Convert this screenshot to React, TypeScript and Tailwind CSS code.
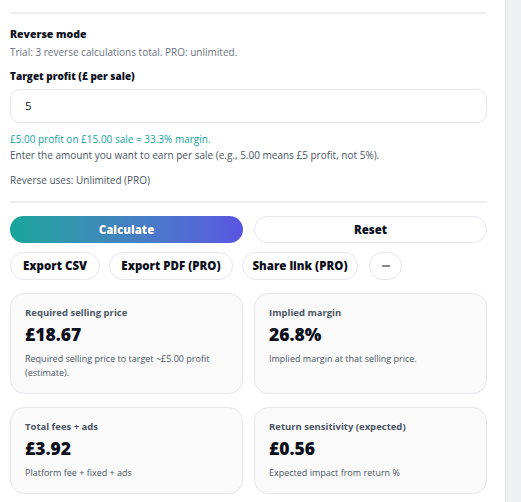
import { Minus } from "lucide-react";

function Card({ title, value, desc }: { title: string; value: string; desc: string }) {
  return (
    <div className="rounded-[14px] border border-[#e5e7eb] bg-[#fafafb] px-[14px] pt-[12px] pb-[13px]">
      <div className="text-[9.5px] font-bold text-[#4b5563] leading-[14px]">{title}</div>
      <div className="mt-[2px] text-[17.5px] font-extrabold text-[#0b0f1a] leading-[24px]">{value}</div>
      <div className="mt-[6px] text-[9px] text-[#4b5563] leading-[14px]">{desc}</div>
    </div>
  );
}

const pill = "h-[28px] rounded-full border border-[#e5e7eb] bg-white text-[11.5px] font-extrabold text-[#0b0f1a] whitespace-nowrap";

export default function App() {
  return (
    <div className="flex h-[502px] w-[521px] overflow-hidden bg-white" style={{ fontFamily: '"Open Sans", "Noto Sans", sans-serif' }}>
      <div className="w-[505px] px-[10px] pr-[18px]">
        <div className="mt-[12px] border-t-2 border-[#eeeff1]" />
        <div className="mt-[12px] text-[10.5px] font-extrabold text-[#0b0f1a] leading-[16px]">Reverse mode</div>
        <div className="mt-[3px] text-[10px] text-[#6b7280] leading-[14px]">Trial: 3 reverse calculations total. PRO: unlimited.</div>
        <div className="mt-[10px] text-[10px] font-extrabold text-[#0b0f1a] leading-[14px]">Target profit (£ per sale)</div>
        <div className="mt-[6px] flex h-[34px] items-center rounded-[10px] border border-[#e5e7eb] px-[14px] text-[11.5px] text-[#111827]">5</div>
        <div className="mt-[9px] text-[10px] text-[#14a39b] leading-[14px]">£5.00 profit on £15.00 sale ≈ 33.3% margin.</div>
        <div className="mt-[2px] text-[10px] text-[#4b5563] leading-[14px]">Enter the amount you want to earn per sale (e.g., 5.00 means £5 profit, not 5%).</div>
        <div className="mt-[11px] text-[10px] text-[#4b5563] leading-[14px]">Reverse uses: Unlimited (PRO)</div>
        <div className="mt-[14px] border-t-2 border-[#eeeff1]" />
        <div className="mt-[13px] grid grid-cols-2 gap-[11px]">
          <button className="h-[27px] rounded-full bg-gradient-to-r from-[#14a59a] to-[#5a55e2] text-[11.5px] font-extrabold text-white [text-shadow:0_0_1px_rgba(0,0,0,0.3)]">Calculate</button>
          <button className="h-[27px] rounded-full border border-[#e5e7eb] bg-white text-[11.5px] font-extrabold text-[#0b0f1a]">Reset</button>
        </div>
        <div className="mt-[9px] flex gap-[9px]">
          <button className={`${pill} w-[90px]`}>Export CSV</button>
          <button className={`${pill} w-[124px]`}>Export PDF (PRO)</button>
          <button className={`${pill} w-[116px]`}>Share link (PRO)</button>
          <button className="ml-[2px] flex h-[28px] w-[33px] items-center justify-center rounded-full border border-[#e5e7eb] bg-white text-[#0b0f1a]"><Minus size={12} strokeWidth={2} /></button>
        </div>
        <div className="mt-[13px] grid grid-cols-2 gap-x-[11px] gap-y-[13px]">
          <Card title="Required selling price" value="£18.67" desc="Required selling price to target ~£5.00 profit (estimate)." />
          <Card title="Implied margin" value="26.8%" desc="Implied margin at that selling price." />
          <Card title="Total fees + ads" value="£3.92" desc="Platform fee + fixed + ads" />
          <Card title="Return sensitivity (expected)" value="£0.56" desc="Expected impact from return %" />
        </div>
      </div>
      <div className="w-[16px] border-l border-[#e3e6eb] bg-[#eef0f4]" />
    </div>
  );
}
